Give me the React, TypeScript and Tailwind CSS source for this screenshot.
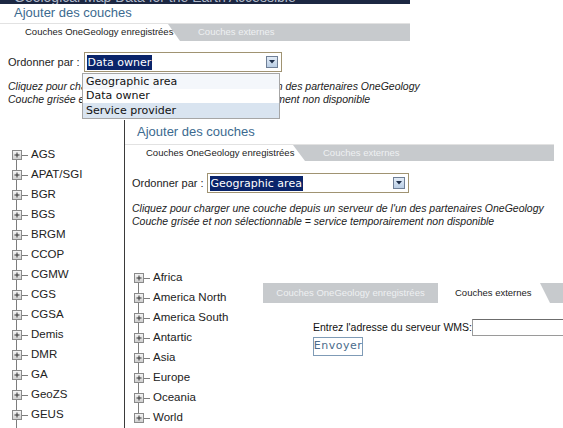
import React from "react";

const arial = { fontFamily: '"Liberation Sans", Arial, sans-serif' };
const verd = { fontFamily: '"DejaVu Sans", Verdana, sans-serif' };

function Plus() {
  return (
    <div className="w-[10px] h-[10px] shrink-0 border border-[#8a8a8a] bg-gradient-to-b from-[#f4f4f4] to-[#cfcfcf] flex items-center justify-center">
      <svg width="8" height="8" viewBox="0 0 8 8">
        <path d="M1.5 4H6.5M4 1.5V6.5" stroke="#333" strokeWidth="1" />
      </svg>
    </div>
  );
}

function Tree({ items, lineToBottom }: { items: string[]; lineToBottom?: boolean }) {
  return (
    <div className="relative flex flex-col">
      <div
        className={
          "absolute left-[4px] top-[10px] w-px bg-[#7d7d7d] " +
          (lineToBottom ? "bottom-[-20px]" : "bottom-[10px]")
        }
      />
      {items.map((t) => (
        <div key={t} className="relative flex items-center h-[20px]">
          <Plus />
          <div className="w-[6px] h-px bg-[#7d7d7d]" />
          <span className="ml-[3px] text-[11.5px] text-[#222] whitespace-nowrap" style={arial}>
            {t}
          </span>
        </div>
      ))}
    </div>
  );
}

function Arrow() {
  return (
    <div className="w-[12px] h-[12px] border border-[#6f7f96] bg-gradient-to-b from-[#e3ecf7] to-[#b9cde4] flex items-center justify-center">
      <svg width="6" height="4" viewBox="0 0 6 4">
        <path d="M0 0H6L3 3.5Z" fill="#1e2e4a" />
      </svg>
    </div>
  );
}

function Select({ value, w }: { value: string; w: string }) {
  return (
    <div className={"h-[20px] border border-[#a09372] bg-white flex items-center pl-[2px] pr-[3px] justify-between " + w}>
      <span className="bg-[#0a246a] text-white text-[11px] leading-[15px] px-[1px]" style={verd}>
        {value}
      </span>
      <Arrow />
    </div>
  );
}

function TabBar({ w, pl }: { w: string; pl: string }) {
  return (
    <div className={"h-[18px] bg-[#c7cacd] flex border-t border-[#e2e2e2] " + w}>
      <div
        className={
          "h-full w-[180px] shrink-0 bg-white [clip-path:polygon(0_0,calc(100%-12px)_0,100%_100%,0_100%)] flex items-center " +
          pl
        }
      >
        <span className="text-[9.5px] text-[#222] whitespace-nowrap">Couches OneGeology enregistrées</span>
      </div>
      <div className="h-full flex items-center pl-[18px]">
        <span className="text-[9.5px] text-[#eef0f2] whitespace-nowrap">Couches externes</span>
      </div>
    </div>
  );
}

function Info({ pl, mt }: { pl: string; mt: string }) {
  return (
    <div className={"text-[10.5px] leading-[13px] italic text-[#222] whitespace-nowrap " + pl + " " + mt}>
      <div>Cliquez pour charger une couche depuis un serveur de l'un des partenaires OneGeology</div>
      <div>Couche grisée et non sélectionnable = service temporairement non disponible</div>
    </div>
  );
}

export default function App() {
  return (
    <div className="relative w-[563px] h-[428px] overflow-hidden bg-white" style={arial}>
      {/* Left tree (data owners) */}
      <div className="absolute left-[12px] top-[145px]">
        <Tree
          lineToBottom
          items={[
            "AGS",
            "APAT/SGI",
            "BGR",
            "BGS",
            "BRGM",
            "CCOP",
            "CGMW",
            "CGS",
            "CGSA",
            "Demis",
            "DMR",
            "GA",
            "GeoZS",
            "GEUS",
          ]}
        />
      </div>

      {/* Screenshot 2: Geographic area */}
      <div className="absolute left-[124px] top-[120px] right-0 bottom-0 border-l border-[#3a3a3a] bg-white flex flex-col">
        <div className="h-[25px] pl-[12px] pt-[4px] text-[13px] leading-[16px] text-[#3c6a8f]">Ajouter des couches</div>
        <TabBar w="w-[429px]" pl="pl-[21px]" />
        <div className="flex items-center gap-[3px] pl-[7px] mt-[12px]">
          <span className="text-[11px] text-[#222]">Ordonner par :</span>
          <Select value="Geographic area" w="w-[202px]" />
        </div>
        <Info pl="pl-[7px]" mt="mt-[9px]" />
        <div className="pl-[9px] mt-[40px]">
          <Tree
            items={[
              "Africa",
              "America North",
              "America South",
              "Antartic",
              "Asia",
              "Europe",
              "Oceania",
              "World",
            ]}
          />
        </div>
      </div>

      {/* Screenshot 1: Data owner with open dropdown */}
      <div className="absolute left-0 top-0 w-[410px] h-[119px] bg-white flex flex-col">
        <div className="h-[4px] bg-[#1c2742] overflow-hidden">
          <div className="-mt-[10px] pl-[14px] text-[14px] leading-[14px] text-[#aeb8c9] whitespace-nowrap">
            Geological Map Data for the Earth Accessible
          </div>
        </div>
        <div className="h-[19px] pl-[14px] pt-[1px] text-[13px] leading-[16px] text-[#3c6a8f]">Ajouter des couches</div>
        <TabBar w="w-[410px]" pl="pl-[25px]" />
        <div className="flex items-center gap-[4px] pl-[8px] mt-[11px]">
          <span className="text-[11px] text-[#222]">Ordonner par :</span>
          <Select value="Data owner" w="w-[198px]" />
        </div>
        <Info pl="pl-[8px]" mt="mt-[8px]" />
        {/* dropdown list */}
        <div
          className="absolute left-[82px] top-[73px] w-[198px] border border-[#a6a6a6] bg-white flex flex-col text-[11px] text-[#111]"
          style={verd}
        >
          <div className="h-[15px] leading-[15px] pl-[3px] bg-[#f4f7fb]">Geographic area</div>
          <div className="h-[14px] leading-[14px] pl-[3px]">Data owner</div>
          <div className="h-[15px] leading-[15px] pl-[3px] bg-[#d9e4f0]">Service provider</div>
        </div>
      </div>

      {/* Screenshot 4: Couches externes */}
      <div className="absolute left-[263px] top-[283px] right-0 h-[80px] bg-white flex flex-col">
        <div className="h-[20px] bg-[#c7cacd] flex">
          <div className="h-full w-[175px] flex items-center justify-center">
            <span className="text-[9.5px] text-[#eef0f2] whitespace-nowrap">Couches OneGeology enregistrées</span>
          </div>
          <div className="h-full w-[112px] bg-white [clip-path:polygon(0_0,calc(100%-10px)_0,100%_100%,0_100%)] flex items-center pl-[17px]">
            <span className="text-[9.5px] text-[#222] whitespace-nowrap">Couches externes</span>
          </div>
        </div>
        <div className="pl-[50px] mt-[16px] flex flex-col items-start">
          <div className="flex items-center gap-[3px] whitespace-nowrap">
            <span className="text-[10.5px] text-[#111] w-[156px] shrink-0">Entrez l'adresse du serveur WMS:</span>
            <div className="w-[120px] h-[17px] shrink-0 border border-[#9a9a9a] border-t-[#6c6c6c] bg-white" />
          </div>
          <div
            className="mt-[1px] h-[19px] w-[50px] border border-[#7f9bb6] bg-white flex items-center justify-center text-[11px] text-[#4b6c8c] tracking-[0.5px]"
            style={verd}
          >
            Envoyer
          </div>
        </div>
      </div>
    </div>
  );
}
